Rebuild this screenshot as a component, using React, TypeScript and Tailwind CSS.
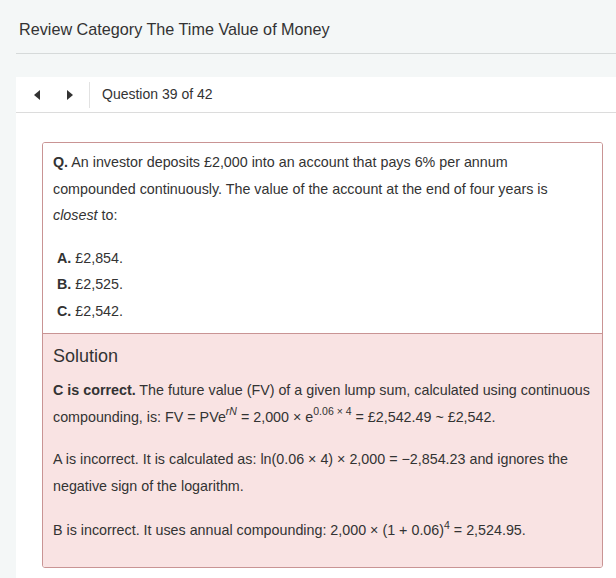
import React from 'react';

function Arrow({ dir }: { dir: 'left' | 'right' }) {
  return (
    <svg width="6" height="10" viewBox="0 0 6 10" aria-hidden="true">
      {dir === 'left' ? (
        <path d="M6 0 L0 5 L6 10 Z" fill="#333" />
      ) : (
        <path d="M0 0 L6 5 L0 10 Z" fill="#333" />
      )}
    </svg>
  );
}

const options = [
  { key: 'A', text: '£2,854.' },
  { key: 'B', text: '£2,525.' },
  { key: 'C', text: '£2,542.' },
];

export default function App() {
  return (
    <div className="h-[578px] overflow-hidden bg-[#f4f7f7] font-['Liberation_Sans',Arial,sans-serif] text-[#333]">
      {/* page heading */}
      <div className="pl-[16px]">
        <h1 className="flex h-[54px] items-center border-b border-[#d6dada] pl-[3px] pt-[6px] text-[16.2px] font-normal text-[#333]">
          Review Category The Time Value of Money
        </h1>
      </div>

      <div className="ml-[16px] mt-[23px] bg-white">
        {/* question nav */}
        <div className="flex h-[36px] items-center border-b border-[#dcdcdc]">
          <button type="button" className="ml-[18px] flex items-center">
            <Arrow dir="left" />
          </button>
          <button type="button" className="ml-[27px] flex items-center">
            <Arrow dir="right" />
          </button>
          <span className="ml-[16px] h-[26px] w-px bg-[#e2e2e2]" />
          <span className="ml-[12px] text-[14px]">Question 39 of 42</span>
        </div>

        <div className="pb-[10px] pl-[26px] pr-[13px] pt-[29px]">
          <div className="overflow-hidden rounded-[3px] border border-[#c99494] text-[14.3px] leading-[26.5px]">
            <div className="bg-white px-[10px] pb-[9px] pt-[6px]">
              <p>
                <b>Q.</b> An investor deposits £2,000 into an account that pays 6% per annum
                compounded continuously. The value of the account at the end of four years is{' '}
                <i>closest</i> to:
              </p>
              <ul className="mt-[16px] pl-[4px]">
                {options.map((o) => (
                  <li key={o.key}>
                    <b>{o.key}.</b> {o.text}
                  </li>
                ))}
              </ul>
            </div>

            <div className="border-t border-[#c99494] bg-[#f9e3e3] px-[10px] pb-[23px] pt-[7px]">
              <h2 className="text-[18px] font-normal leading-[30px]">Solution</h2>
              <p className="mt-[6px]">
                <b>C is correct.</b> The future value (FV) of a given lump sum, calculated using
                continuous compounding, is: FV = PVe
                <sup className="top-[-0.6em] text-[10.5px] leading-none italic">rN</sup> = 2,000 × e
                <sup className="top-[-0.6em] text-[10.5px] leading-none">0.06 × 4</sup> = £2,542.49 ~
                £2,542.
              </p>
              <p className="mt-[16px]">
                A is incorrect. It is calculated as: ln(0.06 × 4) × 2,000 = −2,854.23 and ignores the
                negative sign of the logarithm.
              </p>
              <p className="mt-[18px]">
                B is incorrect. It uses annual compounding: 2,000 × (1 + 0.06)
                <sup className="top-[-0.6em] text-[10.5px] leading-none">4</sup> = 2,524.95.
              </p>
            </div>
          </div>
        </div>
      </div>
    </div>
  );
}
